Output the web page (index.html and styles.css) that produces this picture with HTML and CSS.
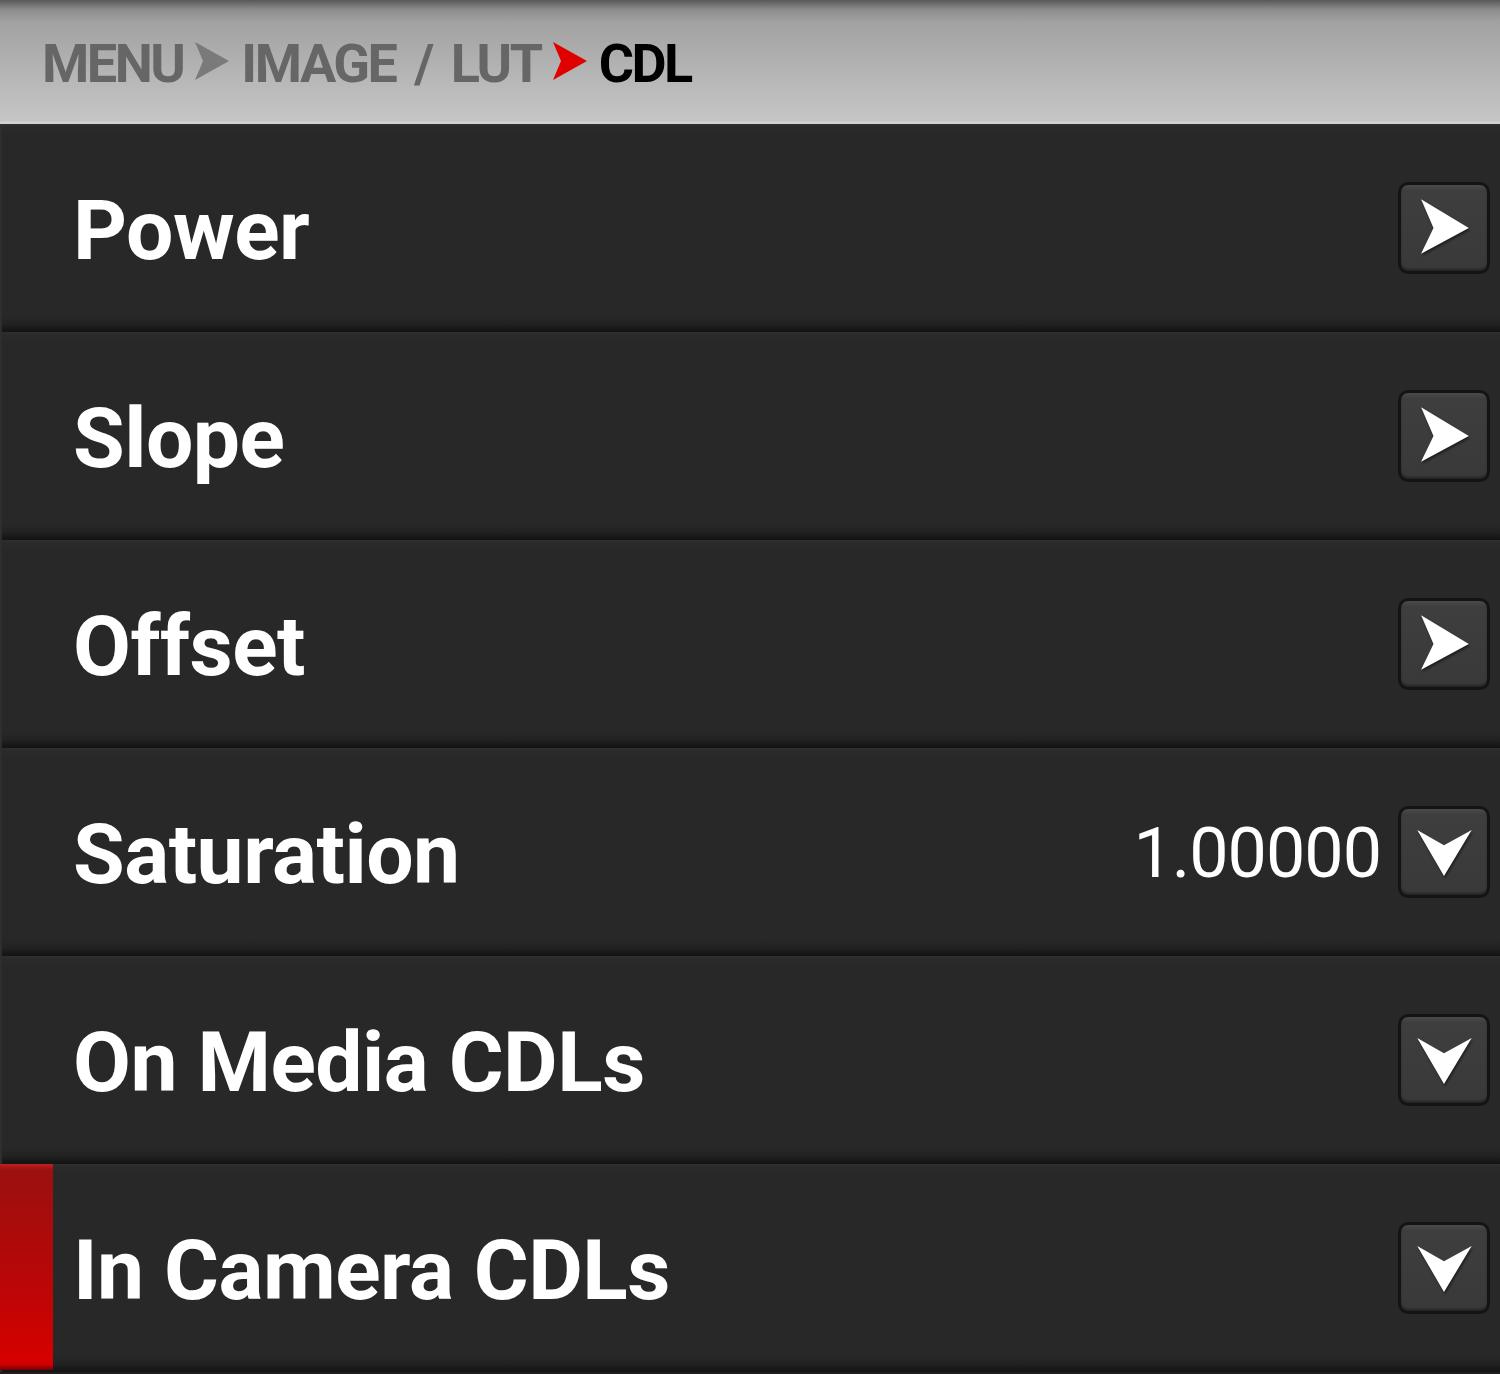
FILE: index.html
```html
<!DOCTYPE html>
<html>
<head>
<meta charset="utf-8">
<link rel="stylesheet" href="styles.css">
</head>
<body>
<div class="screen">
  <header class="crumbs">
    <span class="crumb">MENU</span>
    <svg class="sep" viewBox="0 0 34 40"><polygon points="0,0 34,19 0,38 8,19" fill="#7a7a7a"/></svg>
    <span class="crumb">IMAGE / LUT</span>
    <svg class="sep" viewBox="0 0 34 40"><polygon points="0,0 34,19 0,38 8,19" fill="#e00000"/></svg>
    <span class="crumb current">CDL</span>
  </header>
  <div class="list">
    <div class="row">
      <span class="label">Power</span>
      <span class="btn"><svg viewBox="0 0 90 90"><polygon points="21,15 71,45 21,72 34,45" fill="#fff"/></svg></span>
    </div>
    <div class="row">
      <span class="label">Slope</span>
      <span class="btn"><svg viewBox="0 0 90 90"><polygon points="21,15 71,45 21,72 34,45" fill="#fff"/></svg></span>
    </div>
    <div class="row">
      <span class="label">Offset</span>
      <span class="btn"><svg viewBox="0 0 90 90"><polygon points="21,15 71,45 21,72 34,45" fill="#fff"/></svg></span>
    </div>
    <div class="row">
      <span class="label">Saturation</span>
      <span class="value">1.00000</span>
      <span class="btn"><svg viewBox="0 0 90 90"><polygon points="17,22 45,38 74,22 45,70" fill="#fff"/></svg></span>
    </div>
    <div class="row">
      <span class="label">On Media CDLs</span>
      <span class="btn"><svg viewBox="0 0 90 90"><polygon points="17,22 45,38 74,22 45,70" fill="#fff"/></svg></span>
    </div>
    <div class="row selected">
      <span class="mark"></span>
      <span class="label">In Camera CDLs</span>
      <span class="btn"><svg viewBox="0 0 90 90"><polygon points="17,22 45,38 74,22 45,70" fill="#fff"/></svg></span>
    </div>
  </div>
</div>
</body>
</html>
```

FILE: styles.css
```css
html, body {
  margin: 0;
  padding: 0;
  background: #1c1c1c;
}
.screen {
  width: 1500px;
  height: 1374px;
  overflow: hidden;
  font-family: Roboto, "Liberation Sans", sans-serif;
  background: #1e1e1e;
}
.crumbs {
  height: 124px;
  box-sizing: border-box;
  display: flex;
  align-items: center;
  gap: 12px;
  padding: 0 0 0 42px;
  background: linear-gradient(to bottom, #585858 0px, #8e8e8e 10px, #a2a2a2 22px, #b0b0b0 60px, #c6c6c6 121px, #d2d2d2 122px, #d2d2d2 124px);
}
.crumb {
  font-weight: 700;
  font-size: 54px;
  letter-spacing: -2.5px;
  word-spacing: 8px;
  color: #666666;
  line-height: 1;
  padding-top: 4px;
}
.crumb.current {
  color: #000;
}
.sep {
  width: 34px;
  height: 40px;
  flex: none;
}
.list {
  display: flex;
  flex-direction: column;
}
.row {
  position: relative;
  height: 208px;
  box-sizing: border-box;
  display: flex;
  align-items: center;
  padding: 0 10px 0 71px;
  background: linear-gradient(to bottom, #303030 0px, #2a2a2a 3px, #282828 10px, #282828 190px, #222 200px, #151515 206px, #151515 208px);
  border-left: 2px solid #2e2e2e;
}
.label {
  flex: 1;
  color: #fff;
  font-weight: 700;
  font-size: 84px;
  line-height: 1;
  letter-spacing: -0.5px;
  padding-top: 6px;
}
.value {
  color: #fff;
  font-size: 70px;
  font-weight: 400;
  line-height: 1;
  letter-spacing: -1px;
  margin-right: 17px;
  padding-top: 2px;
}
.btn {
  width: 92px;
  height: 92px;
  box-sizing: border-box;
  border: 3px solid #141414;
  border-radius: 10px;
  background: linear-gradient(to bottom, #4a4a4a 0px, #3e3e3e 6px, #393939 100%);
  box-shadow: inset 0 -2px 2px rgba(0,0,0,0.35);
  display: flex;
  align-items: center;
  justify-content: center;
  flex: none;
}
.btn svg {
  width: 86px;
  height: 86px;
  filter: drop-shadow(1px 2px 1px rgba(0,0,0,0.5));
}
.mark {
  position: absolute;
  left: -2px;
  top: 0;
  width: 53px;
  height: 206px;
  background: linear-gradient(to bottom, #c02020 0px, #9c1010 6px, #b40808 100px, #d60000 195px, #d00000 200px, #700 206px);
}
```
